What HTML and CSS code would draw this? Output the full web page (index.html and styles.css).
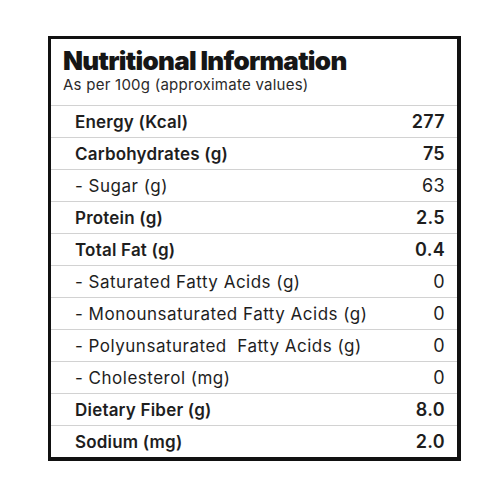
FILE: index.html
```html
<!DOCTYPE html>
<html lang="en">
<head>
    <meta charset="UTF-8">
    <title>Nutritional Information</title>
    <link rel="stylesheet" href="styles.css">
</head>
<body>

<div class="label">
    <div class="head">
        <h1>Nutritional Information</h1>
        <p>As per 100g (approximate values)</p>
    </div>
    <div class="rows">
        <div class="row main"><span>Energy (Kcal)</span><span>277</span></div>
        <div class="row main"><span>Carbohydrates (g)</span><span>75</span></div>
        <div class="row"><span>- Sugar (g)</span><span>63</span></div>
        <div class="row main"><span>Protein (g)</span><span>2.5</span></div>
        <div class="row main"><span>Total Fat (g)</span><span>0.4</span></div>
        <div class="row"><span>- Saturated Fatty Acids (g)</span><span>0</span></div>
        <div class="row"><span>- Monounsaturated Fatty Acids (g)</span><span>0</span></div>
        <div class="row"><span>- Polyunsaturated&nbsp; Fatty Acids (g)</span><span>0</span></div>
        <div class="row"><span>- Cholesterol (mg)</span><span>0</span></div>
        <div class="row main"><span>Dietary Fiber (g)</span><span>8.0</span></div>
        <div class="row main"><span>Sodium (mg)</span><span>2.0</span></div>
    </div>
</div>

</body>
</html>
```

FILE: styles.css
```css
body {
    margin: 0;
    background: #fff;
    font-family: "Inter", "Noto Sans", sans-serif;
    color: #1e1e1e;
}

.label {
    width: 406px;
    margin: 36px 0 0 48px;
    border: 3px solid #111;
    border-right-width: 4px;
    border-bottom-width: 4px;
}

.head {
    padding: 6px 12px 12px;
    border-bottom: 1px solid #d2d2d2;
}

.head h1 {
    margin: 0;
    font-size: 26px;
    font-weight: 900;
    letter-spacing: -0.7px;
    line-height: 31px;
    color: #161616;
}

.head p {
    margin: 0;
    font-size: 15px;
    letter-spacing: 0.25px;
    line-height: 17px;
    color: #2a2a2a;
}

.row {
    display: flex;
    justify-content: space-between;
    align-items: center;
    height: 31px;
    padding: 0 12px 0 24px;
    border-bottom: 1px solid #d2d2d2;
    font-size: 17px;
    letter-spacing: 0.5px;
}

.row:last-child {
    border-bottom: none;
}

.row span:last-child {
    font-size: 18px;
    letter-spacing: 0.3px;
}

.row.main {
    font-size: 17px;
    font-weight: 600;
    letter-spacing: 0.2px;
}
```
